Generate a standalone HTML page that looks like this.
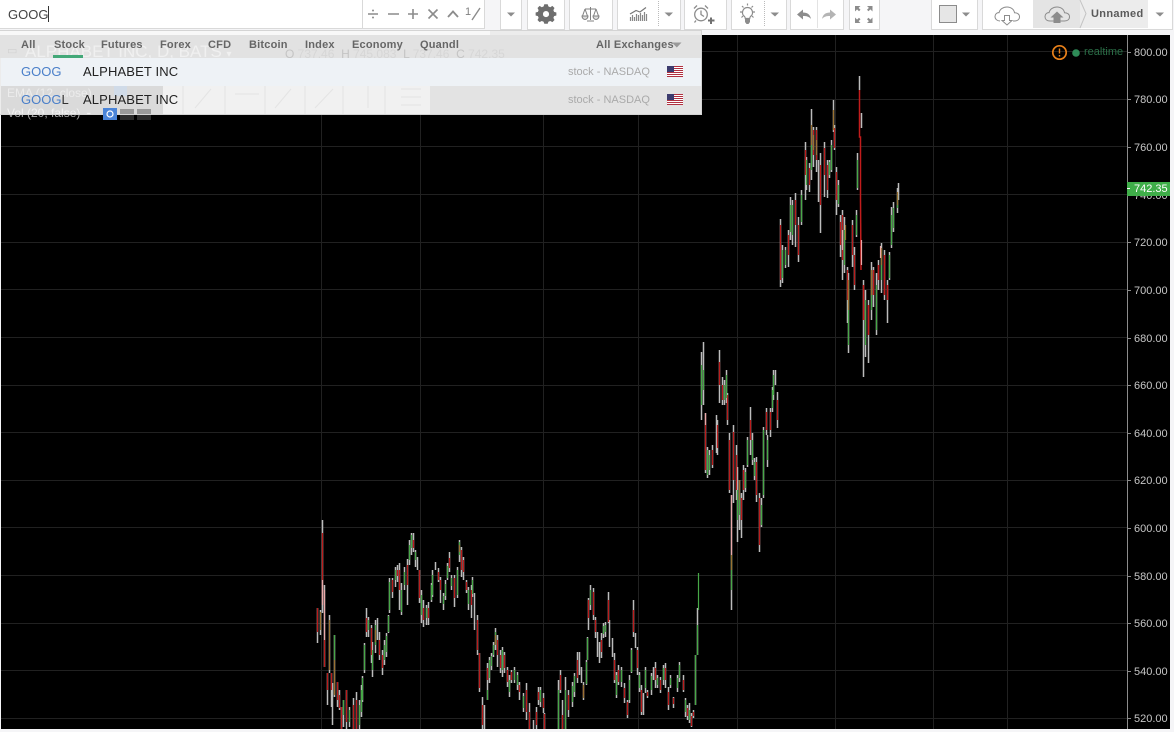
<!DOCTYPE html>
<html><head><meta charset="utf-8"><style>
html,body{margin:0;padding:0}
body{width:1174px;height:732px;position:relative;overflow:hidden;background:#f5f5f7;font-family:"Liberation Sans",sans-serif}
.a{position:absolute}
.box{position:absolute;top:-1px;height:29px;background:#fff;border:1px solid #d9d9d9;box-sizing:content-box}
.t{position:absolute;white-space:nowrap}
.tab{position:absolute;top:39px;font-size:11px;line-height:13px;color:#666;font-weight:bold;letter-spacing:.2px;white-space:nowrap}
.row{position:absolute;left:1px;width:700px;height:28px;overflow:hidden}
.sym{position:absolute;left:20px;top:6px;font-size:13px;line-height:16px;color:#4a7fc9;white-space:nowrap}
.sym b{font-weight:normal;color:#333}
.nm{position:absolute;left:82px;top:6px;font-size:13px;line-height:16px;color:#222;letter-spacing:.13px;white-space:nowrap}
.ex{position:absolute;left:567px;top:8px;font-size:11px;line-height:13px;color:#aaa;white-space:nowrap}
.ax{position:absolute;left:1134px;font-size:11px;line-height:13px;color:#c6c6c6;white-space:nowrap}
</style></head><body>
<div class="a" style="left:1px;top:35px;width:1169px;height:694px;background:#000"></div>
<svg class="a" style="left:0;top:0" width="1174" height="732" fill="none">
<defs><filter id="s" x="0" y="0" width="1174" height="732" filterUnits="userSpaceOnUse"><feGaussianBlur stdDeviation=".35"/></filter></defs>
<path stroke="#212121" d="M1 51.5H1127M1 99.5H1127M1 146.5H1127M1 194.5H1127M1 242.5H1127M1 289.5H1127M1 337.5H1127M1 385.5H1127M1 432.5H1127M1 480.5H1127M1 527.5H1127M1 575.5H1127M1 623.5H1127M1 670.5H1127M1 718.5H1127"/>
<path stroke="#212121" d="M321.5 35V729M420.5 35V729M543.5 35V729M638.5 35V729M737.5 35V729M835.5 35V729M933.5 35V729M1007.5 35V729"/>
<path stroke="#8c8c8c" d="M1127.5 35V729"/>
<path stroke="#8c8c8c" d="M1127 52.5H1131M1127 99.5H1131M1127 147.5H1131M1127 242.5H1131M1127 290.5H1131M1127 338.5H1131M1127 385.5H1131M1127 433.5H1131M1127 480.5H1131M1127 528.5H1131M1127 576.5H1131M1127 623.5H1131M1127 671.5H1131M1127 718.5H1131"/>
<g transform="translate(.5,0)" stroke-width="1.200" filter="url(#s)">
<path stroke="#bcbcbc" stroke-width="1.500" d="M317 608V643M320 610V635M322 520V613M324 585V667M327 673V705M329 615V673M331 673V707M332 683V725M334 635V697M337 682V707M339 690V710M341 707V729M343 700V727M346 690V729M349 707V727M353 698V729M356 692V729M359 700V729M361 685V717M362 676V702M364 643V673M366 608V637M368 617V637M371 625V663M372 642V677M375 620V653M377 618V640M379 632V660M382 650V675M384 640V665M386 633V657M388 615V633M389 578V613M392 578V598M395 567V587M397 565V582M399 563V610M401 583V615M404 567V590M407 559V605M409 540V565M411 533V555M413 533V552M415 550V567M417 557V570M419 570V603M421 590V623M423 600V627M426 605V625M428 602V625M431 583V602M432 570V597M435 562V570M438 568V582M440 577V603M443 593V610M445 580V600M447 563V580M449 552V572M451 575V590M454 575V607M457 567V598M459 540V562M461 547V577M463 557V580M466 580V593M468 587V610M471 585V618M472 577V597M474 593V630M477 615V655M479 653V692M482 697V729M484 705V729M487 663V700M489 657V683M491 653V670M493 642V657M495 628V650M497 635V667M500 650V673M502 647V677M504 652V673M507 667V687M509 675V697M511 670V683M514 667V683M517 672V690M519 682V700M523 693V712M526 683V720M529 703V729M533 720V729M536 707V729M538 687V705M540 687V707M543 693V713M544 713V729M558 680V729M560 670V693M562 700V729M565 677V729M568 690V717M572 682V707M574 673V697M577 652V683M579 652V675M581 667V683M583 682V700M586 660V685M587 637V660M588 598V630M590 585V610M593 588V620M595 617V638M597 632V657M599 642V663M601 633V658M603 623V638M605 622V637M608 592V623M609 620V647M612 638V657M614 653V683M616 672V698M618 665V685M621 667V687M624 683V703M627 700V718M629 675V703M631 648V673M633 600V637M635 633V648M637 647V675M639 672V692M641 685V715M643 693V715M645 667V693M647 690V698M651 673V695M653 667V680M655 662V688M657 675V688M660 677V693M663 665V685M665 663V688M668 687V710M670 675V688M673 697V708M677 675V692M679 662V682M683 675V692M685 698V717M687 705V720M689 703V723M691 713V727M693 710V718M695 655V705M697 608V655M701 352V420M703 342V405M705 413V473M707 447V478M709 450V475M712 445V468M716 415V453M717 420V455M719 350V403M722 377V405M724 380V405M726 370V403M727 393V425M729 433V493M731 495V610M733 425V503M736 445V500M737 467V542M739 480V530M741 493V538M743 465V500M745 468V492M747 437V467M750 407V455M752 433V465M754 458V480M756 457V502M759 493V552M761 498V527M763 427V498M766 408V435M767 435V467M770 408V437M772 387V412M773 370V400M775 370V385M777 392V428M780 219V287M782 245V283M785 247V268M788 230V267M790 197V240M792 200V245M795 193V247M798 217V262M801 190V225M805 142V200M806 157V190M809 163V192M811 109V180M813 127V167M816 127V172M818 160V202M820 153V233M824 142V197M827 160V198M829 160V178M831 140V172M833 100V132M834 125V150M836 167V215M838 180V207M840 215V257M842 210V280M844 217V273M847 267V323M848 273V353M852 220V267M854 247V290M856 210V237M857 153V190M859 76V90M861 113V128M863 280V377M865 290V357M868 300V363M871 262V320M873 267V307M876 273V335M878 260V290M881 243V293M884 250V300M887 280V323M889 252V280M891 207V248M893 202V232M897 188V213M898 183V200"/>
<path stroke="#bb1c1c" d="M317 608V632M322 533V600M324 640V667M327 673V690M331 673V690M337 682V700M339 695V708M341 707V729M346 690V722M353 705V729M356 700V729M366 618V632M371 628V655M379 640V655M382 655V668M392 580V592M397 570V576M399 570V590M407 565V585M413 540V548M419 570V598M423 608V620M428 608V618M438 572V580M440 580V590M449 558V568M454 578V598M461 550V570M463 560V572M466 582V590M471 590V605M477 620V650M479 653V688M482 705V725M487 668V680M497 640V655M500 655V668M504 655V668M507 670V682M511 672V680M519 685V692M526 690V712M529 712V729M536 712V725M538 692V700M543 698V708M544 714V729M560 675V690M562 715V729M568 695V710M577 660V678M583 688V695M588 600V618M593 592V615M595 620V632M601 640V652M608 600V622M614 660V680M618 670V682M624 688V698M627 702V715M633 610V632M637 650V668M641 690V712M647 692V696M655 668V680M660 680V690M665 668V680M668 692V705M673 698V704M683 680V690M687 708V716M691 716V726M693 712V716M705 415V470M712 450V465M717 425V448M719 362V385M722 385V400M727 395V420M729 440V490M733 432V480M736 455V490M741 498V520M743 470V490M750 420V440M756 462V495M759 498V545M766 412V430M770 412V430M777 400V420M780 225V280M788 235V255M795 200V225M798 225V255M805 150V175M809 168V185M813 130V155M816 130V160M820 165V205M824 148V175M827 165V190M834 128V148M836 172V200M840 222V245M842 215V260M847 270V300M852 225V255M854 255V285"/>
<path stroke="#c21d1d" stroke-width="1.500" d="M859 90V137L860 137V200L860.500 270M863 285V320M868 305V335M873 270V295M878 265V280M884 255V295M887 285V300"/>
<path stroke="#47a847" d="M334 635V660M343 700V715M349 710V722M359 705V725M361 690V712M362 678V700M364 645V670M368 620V630M372 650V670M375 625V645M384 645V660M386 636V652M388 616V632M389 582V610M395 570V580M401 590V612M404 572V585M409 545V560M411 535V548M415 552V560M421 595V615M426 608V618M431 585V600M432 575V595M443 596V604M445 584V596M447 566V578M451 578V586M457 570V595M459 542V555M468 590V604M472 580V594M487 690V700M489 660V678M491 656V666M493 645V655M495 632V645M502 650V670M509 680V692M514 670V680M517 675V685M523 696V708M540 690V702M558 690V729M565 690V729M572 686V702M574 676V692M586 662V684M587 638V660M590 590V605M603 626V634M605 625V632M616 675V695M621 670V682M629 680V700M631 650V672M639 675V688M645 670V688M651 676V690M657 678V685M663 668V680M670 678V685M677 678V688M679 665V678M685 700V712M689 710V720M695 655V705M697 625V655M698 573V610M701 365V405M703 370V390M707 450V475M709 455V470M724 385V400M726 375V398M731 555V590M737 490V520M739 495V515M745 472V488M747 440V465M752 440V460M754 462V476M761 505V525M763 430V495M767 440V460M772 390V408M773 375V395M782 250V278M785 250V265M790 205V232M792 205V235M801 195V222M806 160V185M811 145V170M829 162V175M831 145V170M838 185V204M844 230V265M848 280V345M856 215V235M857 160V188M865 300V345M871 270V310M876 285V330M881 250V280M889 255V278M891 215V245M893 208V228M897 195V208"/>
<path stroke="#9a7230" d="M329 620V670M334 660V695M731 555V570M739 480V500M811 125V145M813 135V150M833 110V130M848 280V310M871 270V295M881 248V265M897 192V205M320 612V630M375 630V642M459 545V552M495 635V645M583 685V698M816 140V155M845 225V240"/>
<path stroke="#eaa9a9" d="M322 580V605M324 590V640M731 495V555M705 413V425M842 230V250M861 240V265M880 246V258"/>
</g>
</svg>
<div class="ax" style="top:47px">800.00</div><div class="ax" style="top:94px">780.00</div><div class="ax" style="top:142px">760.00</div><div class="ax" style="top:190px">740.00</div><div class="ax" style="top:237px">720.00</div><div class="ax" style="top:285px">700.00</div><div class="ax" style="top:333px">680.00</div><div class="ax" style="top:380px">660.00</div><div class="ax" style="top:428px">640.00</div><div class="ax" style="top:475px">620.00</div><div class="ax" style="top:523px">600.00</div><div class="ax" style="top:571px">580.00</div><div class="ax" style="top:618px">560.00</div><div class="ax" style="top:666px">540.00</div><div class="ax" style="top:713px">520.00</div>
<div class="a" style="left:1127px;top:182px;width:43px;height:14px;background:#3fae49"></div>
<div class="a" style="left:1127px;top:188px;width:3px;height:1px;background:#fff"></div>
<div class="t" style="left:1134px;top:183px;font-size:11px;line-height:13px;color:#fff">742.35</div>
<svg class="a" style="left:1050px;top:43px" width="34" height="20" fill="none"><circle cx="9.5" cy="9.5" r="6.7" stroke="#e8801a" stroke-width="1.7"/><path d="M9.5 5.5V10.5M9.5 12V13.5" stroke="#e8801a" stroke-width="1.4"/><circle cx="26" cy="10" r="3.8" fill="#2e8b57"/></svg>
<div class="t" style="left:1084px;top:46px;font-size:11px;line-height:13px;color:#2a6f47">realtime</div>
<div class="t" style="left:7px;top:106px;font-size:12px;line-height:15px;color:#aaa">Vol (20, false)</div>
<div class="a" style="left:120px;top:109px;width:14px;height:11px;background:#2c2c2c"></div>
<div class="a" style="left:137px;top:109px;width:14px;height:11px;background:#2c2c2c"></div>

<!-- toolbar -->
<div class="a" style="left:0;top:0;width:1174px;height:35px;background:#f5f5f7"></div>
<div class="a" style="left:0;top:-1px;width:484px;height:29px;background:#fff;border-bottom:1px solid #d9d9d9;border-right:1px solid #d9d9d9;box-sizing:content-box"></div>
<div class="a" style="left:362px;top:0;width:1px;height:28px;background:#d9d9d9"></div>
<div class="t" style="left:8px;top:6px;font-size:13px;line-height:17px;color:#444">GOOG</div>
<div class="a" style="left:48px;top:6px;width:1px;height:16px;background:#333"></div>
<div class="box" style="left:500px;width:20px"></div>
<div class="box" style="left:527px;width:36px"></div>
<div class="box" style="left:569px;width:42px"></div>
<div class="box" style="left:617px;width:62px"></div>
<div class="box" style="left:684px;width:41px"></div>
<div class="box" style="left:731px;width:54px"></div>
<div class="box" style="left:790px;width:52px"></div>
<div class="box" style="left:849px;width:29px"></div>
<div class="box" style="left:931px;width:45px"></div>
<div class="box" style="left:982px;width:189px"></div>
<div class="a" style="left:1033px;top:0;width:47px;height:28px;background:#e4e4e4"></div>
<div class="a" style="left:1080px;top:0;width:68px;height:28px;background:#ececec"></div>
<svg class="a" style="left:0;top:0" width="1174" height="32" fill="none">
<g stroke="#8c8c8c" stroke-width="1.6">
<path d="M368 14H378M388 14H399M408 14H418M413 9V19M428.500 9.500L437.500 18.500M437.500 9.500L428.500 18.500"/>
<path d="M448 17L453 11.500L458 17" stroke-width="1.8"/>
<path d="M472 20L480 8" stroke-width="1.4"/>
</g>
<circle cx="373" cy="10.500" r="1" fill="#8c8c8c"/><circle cx="373" cy="17.500" r="1" fill="#8c8c8c"/>
<g fill="#8c8c8c">
<path d="M507 12.500H515L511 16.500Z"/>
<path d="M664.500 12.500H673L669 16.500Z"/>
<path d="M770.500 12.500H779L775 16.500Z"/>
<path d="M962 12.500H970L966 16.500Z"/>
<path d="M1155.500 12.500H1164L1160 16.500Z"/>
</g>
<path fill="#6e6e6e" fill-rule="evenodd" transform="translate(546,14) scale(.85) translate(-546,-17.500)" d="M544 6H548L548.800 8.500L551 9.500L553.500 8L556 10.500L554.700 13L555.500 15L558.200 15.800V19.200L555.500 20L554.700 22L556 24.500L553.500 27L551 25.700L548.800 26.600L548 29H544L543.200 26.600L541 25.700L538.500 27L536 24.500L537.300 22L536.500 20L533.800 19.200V15.800L536.500 15L537.300 13L536 10.500L538.500 8L541 9.500L543.200 8.500ZM546 14A3.600 3.600 0 1 0 546 21.200A3.600 3.600 0 1 0 546 14Z"/>
<g stroke="#808080" stroke-width="1"><path d="M590.500 7V20M585 9H596M585 9L582.500 16M585 9L587.500 16M596 9L593.500 16M596 9L598.500 16M587 21H594"/><path d="M582 16H588A3 3.500 0 0 1 582 16ZM593 16H599A3 3.500 0 0 1 593 16Z" fill="#ddd"/></g>
<g stroke="#888"><path d="M630.500 21V17M632.500 21V15M634.500 21V17M636.500 21V14M638.500 21V15M640.500 21V13M642.500 21V15M644.500 21V12M646.500 21V14" stroke-width="1.200"/><path d="M630 14L636 10.500L640 12L646 7.500" stroke="#777" stroke-width="1.200"/></g>
<path d="M658.500 1V27" stroke="#bbb" stroke-dasharray="1 1"/>
<path d="M764.500 1V27" stroke="#bbb" stroke-dasharray="1 1"/>
<path d="M817.500 0V28" stroke="#e3e3e3"/>
<g stroke="#8c8c8c" stroke-width="1.300">
<circle cx="701" cy="14.500" r="6.300"/><path d="M701 10.500V14.500L704 16.500M694 8.500L697 5.500M708 8.500L705 5.500M696 20.500L694.500 22.500"/>
</g>
<path d="M708 20.500H714.500M711 17.500V24" stroke="#707070" stroke-width="2"/>
<g stroke="#8c8c8c" stroke-width="1.200">
<path d="M747.500 7.500A5 5 0 0 0 744.500 16.500C745.300 17.300 745.300 17.800 745.300 18.500H749.700C749.700 17.800 749.700 17.300 750.500 16.500A5 5 0 0 0 747.500 7.500Z"/>
<path d="M747.500 3.500V5.500M740 12H742M753 12H755M742 6L743.500 7.500M753 6L751.500 7.500M741.500 17.500L743 16M753.500 17.500L752 16"/>
</g>
<path d="M745 19H750V22L748.500 24H746.500L745 22Z" fill="#8c8c8c"/>
<path d="M797 14.500L803 9.500V12.500C807 12.500 810 14 811 19C809 16.500 806.500 16 803 16V19.500Z" fill="#8c8c8c"/>
<path d="M836 14.500L830 9.500V12.500C826 12.500 823 14 822 19C824 16.500 826.500 16 830 16V19.500Z" fill="#b4b4b4"/>
<g fill="#8c8c8c">
<path d="M855 6H860.500L858.600 7.900L860.500 9.800L859 11.300L857.100 9.400L855 11.500Z"/>
<path d="M872.500 6H867L868.900 7.900L867 9.800L868.500 11.300L870.400 9.400L872.500 11.500Z"/>
<path d="M855 23H860.500L858.600 21.100L860.500 19.200L859 17.700L857.100 19.600L855 17.500Z"/>
<path d="M872.500 23H867L868.900 21.100L867 19.200L868.500 17.700L870.400 19.600L872.500 17.500Z"/>
</g>
<rect x="939.500" y="5.500" width="17" height="17" fill="#e6e6e6" stroke="#8c8c8c"/>
<path d="M1000 21C997 21 995 19 995 16.500C995 14 997 12.500 999 12.700C999.800 9.300 1003 7 1007 7C1011 7 1014 9.500 1014.500 12.700C1017 12.700 1019.500 14 1019.500 16.800C1019.500 19.500 1017.500 21 1014.500 21H1013" stroke="#8c8c8c"/>
<path d="M1004.500 15.500H1009.500V20.500H1012L1007 25L1002 20.500H1004.500Z" stroke="#8c8c8c" fill="#fff"/>
<path d="M1050 21C1046.500 21 1045 19 1045 16.500C1045 14 1047 12.500 1049 12.700C1049.800 9.300 1053 7 1057 7C1061 7 1064 9.500 1064.500 12.700C1067 12.700 1069.500 14 1069.500 16.800C1069.500 19.500 1067.500 21 1064.500 21H1050Z" stroke="#8c8c8c"/>
<path d="M1057 11.500L1063.500 17.500H1060.500V23H1053.500V17.500H1050.500Z" fill="#8c8c8c"/>
<path d="M1080 0L1086 13.500L1080 28" stroke="#c4c4c4"/>
</svg>
<div class="t" style="left:465px;top:6px;font-size:11px;line-height:13px;color:#808080">1</div>
<div class="t" style="left:1091px;top:7px;font-size:11px;line-height:13px;font-weight:bold;color:#5a5a5a;letter-spacing:.35px;margin-top:1px">Unnamed</div>

<!-- dropdown -->
<div class="a" style="left:0;top:30px;width:702px;height:85px;background:#ececec;border:1px solid #d4d4d4;box-sizing:border-box;border-left:0"></div>
<div class="a" style="left:0;top:31px;width:490px;height:4px;background:#f8f8f8"></div>
<div class="a" style="left:0;top:35px;width:701px;height:23px;overflow:hidden;background:#e2e2e2">
  <div class="t" style="left:7px;top:10px;font-size:11px;line-height:12px;color:#d0d0d0">▭</div>
  <div class="t" style="left:25px;top:5px;font-size:17px;line-height:24px;color:#f0f0f0">ALPHABET INC, D, BATS <span style="font-size:10px">▾</span></div>
  <div class="t" style="left:285px;top:12px;font-size:12px;line-height:14px;color:#d6d6d6"><span style="color:#c4c4c4">O</span> 737.46 &nbsp;<span style="color:#c4c4c4">H</span> 745.083 &nbsp;<span style="color:#c4c4c4">L</span> 737.46 &nbsp;<span style="color:#c4c4c4">C</span> 742.35</div>
</div>
<div class="tab" style="left:21px">All</div><div class="tab" style="left:54px">Stock</div><div class="tab" style="left:101px">Futures</div><div class="tab" style="left:160px">Forex</div><div class="tab" style="left:208px">CFD</div><div class="tab" style="left:249px">Bitcoin</div><div class="tab" style="left:305px">Index</div><div class="tab" style="left:352px">Economy</div><div class="tab" style="left:420px">Quandl</div><div class="tab" style="left:596px">All Exchanges</div>
<svg class="a" style="left:671px;top:41px" width="12" height="8"><path d="M1 1.500H10.500L5.800 6.500Z" fill="#999"/></svg>
<div class="a" style="left:53px;top:55px;width:30px;height:3px;background:#43a878"></div>
<div class="row" style="top:58px;background:#eef2f6;height:28px"><div class="sym">GOOG</div><div class="nm">ALPHABET INC</div><div class="ex">stock - NASDAQ</div></div>
<div class="row" style="top:86px;background:#e3e3e3;height:28px">
  <div class="a" style="left:0;top:0;width:162px;height:28px;background:#dadada"></div>
  <div class="a" style="left:162px;top:0;width:267px;height:28px;background:#f1f1f1"></div>
  <svg class="a" style="left:162px;top:0" width="267" height="28" fill="none" stroke="#e4e4e4"><path d="M20 0V28M62 0V28M102 0V28M142 0V28M180 0V28M222 0V28"/><path d="M32 22L48 3M72 8H96M112 22L128 3M152 22L170 3M205 0V22M238 3H258M238 11H258M238 19H258"/></svg>
  <div class="t" style="left:6px;top:0;font-size:12px;line-height:15px;color:#ececec">EMA (12, close)</div>
  <div class="a" style="left:113px;top:-3px;width:13px;height:13px;background:#d0dbe8"></div>
  <div class="t" style="left:6px;top:20px;font-size:12px;line-height:15px;color:#f2f2f2">Vol (20, false) <span style="font-size:8px;margin-left:3px">▾</span></div>
  <div class="a" style="left:119px;top:23px;width:14px;height:5px;background:#999"></div>
  <div class="a" style="left:136px;top:23px;width:14px;height:5px;background:#999"></div>
  <div class="sym">GOOG<b>L</b></div><div class="nm">ALPHABET INC</div><div class="ex">stock - NASDAQ</div>
</div>
<svg class="a" style="left:103px;top:108px" width="15" height="13"><rect width="14" height="12" fill="#4a84d8"/><circle cx="7" cy="6" r="3" fill="none" stroke="#fff" stroke-width="1.200"/></svg>
<svg class="a" style="left:667px;top:66px" width="16" height="12"><rect width="16" height="11" fill="#fff"/><path d="M0 .5H16M0 2.500H16M0 4.500H16M0 6.500H16M0 8.500H16M0 10.500H16" stroke="#b03040"/><rect width="7" height="6" fill="#3c3b6e"/></svg>
<svg class="a" style="left:667px;top:94px" width="16" height="12"><rect width="16" height="11" fill="#fff"/><path d="M0 .5H16M0 2.500H16M0 4.500H16M0 6.500H16M0 8.500H16M0 10.500H16" stroke="#b03040"/><rect width="7" height="6" fill="#3c3b6e"/></svg>
</body></html>
